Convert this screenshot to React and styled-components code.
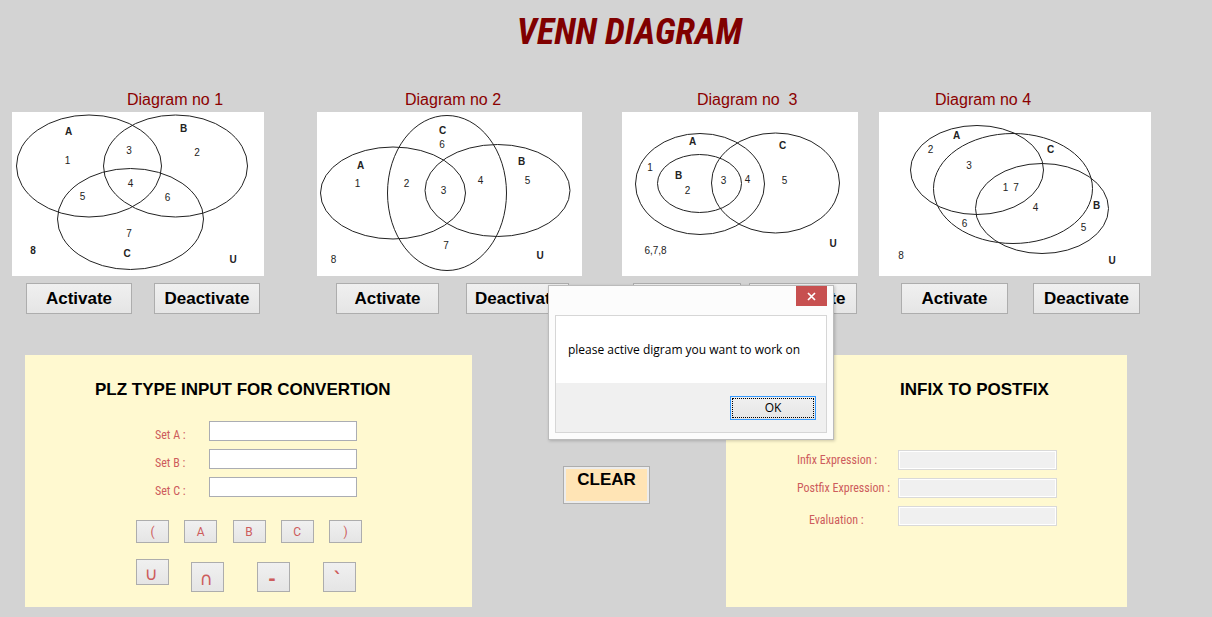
import React from "react";
import styled, { createGlobalStyle } from "styled-components";

const GlobalStyle = createGlobalStyle`
  * { box-sizing: border-box; }
  body {
    margin: 0;
    background: #d3d3d3;
    font-family: "Liberation Sans", Arial, sans-serif;
  }
`;

const Page = styled.div`
  position: relative;
  min-height: 100vh;
  padding-bottom: 10px;
  background: #d3d3d3;
`;

const Title = styled.h1`
  margin: 0;
  padding: 12px 0 0 47px;
  text-align: center;
  font: italic bold 36px/40px "Roboto Condensed", "Liberation Sans", sans-serif;
  color: #800000;
`;

const Diagrams = styled.main`
  display: grid;
  grid-template-columns: 305fr 305fr 257fr 333fr;
  padding: 39px 0 0 12px;
`;

const Card = styled.section`
  min-width: 0;
  padding-right: ${(p) => p.$space}px;
`;

const CardTitle = styled.h2`
  margin: 0;
  padding-left: ${(p) => p.$indent}px;
  font-size: 16px;
  line-height: 18px;
  font-weight: normal;
  white-space: pre;
  color: #8b0000;
`;

const Picture = styled.svg`
  display: block;
  width: 100%;
  height: auto;
  margin-top: 3px;
  background: #fff;
  font-family: "Liberation Sans", Arial, sans-serif;
  font-size: 10px;

  ellipse {
    fill: none;
    stroke: #222;
    stroke-width: 1;
  }
  text {
    fill: #222;
    text-anchor: middle;
  }
`;

const Actions = styled.div`
  display: flex;
  gap: ${(p) => p.$gap}px;
  padding: 7px 0 0 ${(p) => p.$indent}px;
`;

const Button = styled.button`
  padding: 0;
  border: 1px solid #adadad;
  border-radius: 0;
  background: linear-gradient(#f0f0f0, #e5e5e5);
  font: bold 17px/20px "Liberation Sans", Arial, sans-serif;
  color: #000;
`;

const ActionButton = styled(Button)`
  flex: none;
  width: ${(p) => p.$width}px;
  height: 31px;
`;

const Workspace = styled.div`
  display: grid;
  grid-template-columns: 447fr 254fr 401fr;
  align-items: start;
  padding: 41px 85px 0 25px;
`;

const Panel = styled.section`
  min-height: 252px;
  padding-left: ${(p) => p.$indent}px;
  background: #fff9d0;
`;

const PanelTitle = styled.h2`
  margin: 0;
  padding: 25px 0 0 ${(p) => p.$indent || 0}px;
  font-size: 17px;
  line-height: 20px;
  font-weight: bold;
  white-space: nowrap;
`;

const Fields = styled.div`
  display: flex;
  flex-direction: column;
  gap: 8px;
  padding: ${(p) => p.$top}px 0 0 ${(p) => p.$indent || 0}px;
`;

const Field = styled.div`
  display: flex;
  height: 20px;
`;

const Label = styled.label`
  flex: none;
  width: ${(p) => p.$width}px;
  padding: ${(p) => p.$top || 0}px 0 0 ${(p) => p.$indent || 0}px;
  font: 12px/20px "Roboto Condensed", Roboto, "Liberation Sans", sans-serif;
  white-space: nowrap;
  color: #cd5c5c;
`;

const TextBox = styled.input`
  width: 148px;
  height: 20px;
  padding: 1px 3px;
  border: 1px solid #abadb3;
  border-radius: 0;
  background: #fff;
  font: 12px "Liberation Sans", sans-serif;
`;

const ResultBox = styled(TextBox)`
  width: 159px;
  border-color: #d9d9d9;
  background: #f0f0f0;
  box-shadow: inset 0 0 0 1px #fff;
`;

const LetterKeys = styled.div`
  display: flex;
  justify-content: space-between;
  width: 226px;
  margin: 23px 0 0 41px;
`;

const OperatorKeys = styled.div`
  display: flex;
  gap: 33px;
  margin: 16px 0 0 41px;
`;

const KeyPair = styled.div`
  display: flex;
  gap: 22px;
`;

const Key = styled(Button)`
  width: 33px;
  height: 23px;
  font: 12px/16px Roboto, "Liberation Sans", sans-serif;
  color: #cd5c5c;
`;

const OperatorKey = styled(Key)`
  height: ${(p) => (p.$tall ? 30 : 26)}px;
  margin-top: ${(p) => (p.$tall ? 3 : 0)}px;
  padding: 4px 3px 0 0;
  font: ${(p) => (p.$bold ? "bold" : "normal")} 18px/20px "DejaVu Sans", sans-serif;
`;

const ClearButton = styled(Button)`
  width: 87px;
  height: 38px;
  margin: 111px 0 0 91px;
  padding: 0 0 10px;
  background: #ffe4b5;
  box-shadow: inset 0 0 0 2px #ececec;
`;

const Dialog = styled.div`
  position: absolute;
  top: 285px;
  left: 548px;
  width: 286px;
  padding: 0 6px 6px;
  border: 1px solid #bbb;
  background: #fcfcfc;
  box-shadow: 1px 1px 3px rgba(0, 0, 0, 0.2);
`;

const DialogBar = styled.div`
  display: flex;
  justify-content: flex-end;
  height: 29px;
`;

const CloseButton = styled.button`
  display: flex;
  align-items: center;
  justify-content: center;
  width: 31px;
  height: 20px;
  padding: 0;
  border: 0;
  background: #c75050;
`;

const DialogBody = styled.div`
  border: 1px solid #d6d6d6;
  background: #fff;
`;

const Message = styled.p`
  margin: 0;
  padding: 24px 0 23px 12px;
  font: 12px/20px "Open Sans", "Noto Sans", sans-serif;
  white-space: nowrap;
`;

const DialogFooter = styled.div`
  display: flex;
  justify-content: flex-end;
  padding: 13px 10px 12px;
  background: #f0f0f0;
`;

const OkButton = styled(Button)`
  width: 86px;
  height: 24px;
  border-color: #3399ff;
  outline: 1px dotted #000;
  outline-offset: -3px;
  font: 12px/16px "Open Sans", "Noto Sans", sans-serif;
`;

/* ellipses: [cx, cy, rx, ry]; marks: [text, centre x, centre y, bold] */
const diagrams = [
  {
    title: "Diagram no 1", width: 252, space: 53, titleIndent: 115,
    indent: 14, gap: 22, button: 106,
    ellipses: [[77, 54, 72.5, 51], [163.5, 54, 72, 51], [118.5, 107, 73, 50.5]],
    marks: [["A", 56.5, 19, 1], ["1", 55.5, 48], ["3", 117, 38], ["B", 171.5, 16.5, 1], ["2", 185, 40], ["4", 118.5, 71], ["5", 70.5, 84], ["6", 155.5, 85.5], ["7", 117, 121.5], ["C", 115, 141, 1], ["8", 21, 138, 1], ["U", 221, 147, 1]],
  },
  {
    title: "Diagram no 2", width: 265, space: 40, titleIndent: 88,
    indent: 19, gap: 27, button: 103,
    ellipses: [[76, 81, 72.5, 46], [130, 81, 59.5, 77.5], [180.5, 78.5, 72.5, 46]],
    marks: [["C", 125.5, 18.5, 1], ["6", 125, 32.5], ["A", 43.5, 53.5, 1], ["1", 40.5, 71.5], ["2", 89.5, 71], ["3", 126.5, 78], ["4", 163.5, 68], ["B", 204.5, 49.5, 1], ["5", 210.5, 68], ["7", 129, 133], ["8", 16.5, 147], ["U", 223, 143, 1]],
  },
  {
    title: "Diagram no  3", width: 236, space: 21, titleIndent: 75,
    indent: 11, gap: 8, button: 108,
    ellipses: [[78, 72, 64.5, 50.5], [77.5, 71.5, 42, 29], [153.5, 71, 64, 50]],
    marks: [["A", 70.5, 29, 1], ["C", 160.5, 33, 1], ["1", 28, 55], ["B", 56.5, 63, 1], ["2", 65.5, 78], ["3", 101.5, 68.5], ["4", 125.5, 67.5], ["5", 162.5, 68.5], ["6,7,8", 33.5, 138], ["U", 211, 131.5, 1]],
  },
  {
    title: "Diagram no 4", width: 272, space: 61, titleIndent: 56,
    indent: 22, gap: 25, button: 107,
    ellipses: [[98, 58, 66.5, 44.5], [134, 76.5, 79.5, 55], [163, 96.5, 66.5, 45]],
    marks: [["A", 77.5, 23, 1], ["2", 51.5, 37.5], ["3", 90, 53.5], ["C", 171.5, 37.5, 1], ["1", 126.5, 75.5], ["7", 137, 75.5], ["4", 156.5, 95.5], ["B", 217.5, 93, 1], ["6", 85.5, 111.5], ["5", 204.5, 115.5], ["8", 22, 143], ["U", 233, 148.5, 1]],
  },
];

function DiagramCard({ d }) {
  return (
    <Card $space={d.space}>
      <CardTitle $indent={d.titleIndent}>{d.title}</CardTitle>
      <Picture viewBox={`0 0 ${d.width} 164`} role="img" aria-label={d.title}>
        {d.ellipses.map(([cx, cy, rx, ry], i) => (
          <ellipse key={i} cx={cx} cy={cy} rx={rx} ry={ry} />
        ))}
        {d.marks.map(([text, x, y, bold]) => (
          <text key={text} x={x} y={y + 3.5} fontWeight={bold ? "bold" : "normal"}>
            {text}
          </text>
        ))}
      </Picture>
      <Actions $indent={d.indent} $gap={d.gap}>
        <ActionButton $width={d.button}>Activate</ActionButton>
        <ActionButton $width={d.button}>Deactivate</ActionButton>
      </Actions>
    </Card>
  );
}

export default function App() {
  return (
    <Page>
      <GlobalStyle />
      <Title>VENN DIAGRAM</Title>
      <Diagrams>
        {diagrams.map((d) => (
          <DiagramCard key={d.title} d={d} />
        ))}
      </Diagrams>

      <Workspace>
        <Panel $indent={70}>
          <PanelTitle>PLZ TYPE INPUT FOR CONVERTION</PanelTitle>
          <Fields $top={21} $indent={60}>
            {["A", "B", "C"].map((s) => (
              <Field key={s}>
                <Label htmlFor={`set-${s}`} $width={54} $top={4}>{`Set ${s} :`}</Label>
                <TextBox id={`set-${s}`} />
              </Field>
            ))}
          </Fields>
          <LetterKeys>
            {["(", "A", "B", "C", ")"].map((k) => (
              <Key key={k}>{k}</Key>
            ))}
          </LetterKeys>
          <OperatorKeys>
            <KeyPair>
              <OperatorKey>∪</OperatorKey>
              <OperatorKey $tall>∩</OperatorKey>
            </KeyPair>
            <OperatorKey $tall $bold>-</OperatorKey>
            <OperatorKey $tall $bold>`</OperatorKey>
          </OperatorKeys>
        </Panel>

        <div>
          <ClearButton>CLEAR</ClearButton>
        </div>

        <Panel $indent={71}>
          <PanelTitle $indent={103}>INFIX TO POSTFIX</PanelTitle>
          <Fields $top={50}>
            <Field>
              <Label htmlFor="infix" $width={101}>Infix Expression :</Label>
              <ResultBox id="infix" readOnly />
            </Field>
            <Field>
              <Label htmlFor="postfix" $width={101}>Postfix Expression :</Label>
              <ResultBox id="postfix" readOnly />
            </Field>
            <Field>
              <Label htmlFor="evaluation" $width={101} $indent={12} $top={4}>Evaluation :</Label>
              <ResultBox id="evaluation" readOnly />
            </Field>
          </Fields>
        </Panel>
      </Workspace>

      <Dialog role="dialog" aria-label="Message">
        <DialogBar>
          <CloseButton aria-label="Close">
            <svg width="9" height="9" viewBox="0 0 9 9">
              <path d="M1 1l7 7M8 1l-7 7" stroke="#fff" strokeWidth="1.7" />
            </svg>
          </CloseButton>
        </DialogBar>
        <DialogBody>
          <Message>please active digram you want to work on</Message>
          <DialogFooter>
            <OkButton>OK</OkButton>
          </DialogFooter>
        </DialogBody>
      </Dialog>
    </Page>
  );
}
